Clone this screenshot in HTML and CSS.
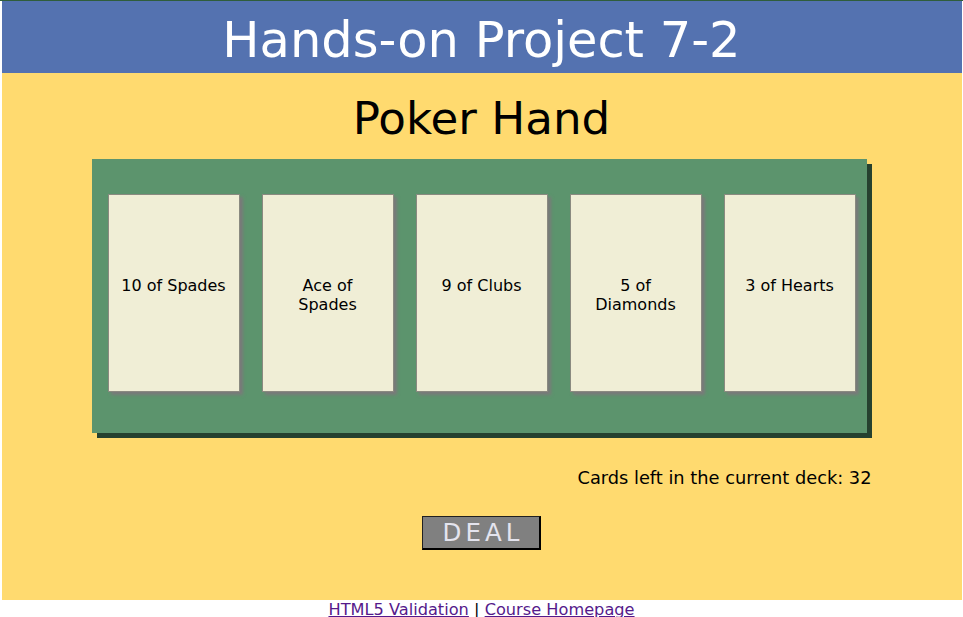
FILE: index.html
```html
<!DOCTYPE html>
<html lang="en">
<head>
<meta charset="utf-8">
<title>Hands-on Project 7-2</title>
<link rel="stylesheet" href="styles.css">
</head>
<body>
<div class="topline"></div>
<div class="wrapper">
  <header class="site-header">Hands-on Project 7-2</header>
  <article class="main">
    <h2 class="title">Poker Hand</h2>
    <div class="table-area">
      <div class="felt">
        <div class="card">10 of Spades</div>
        <div class="card">Ace of Spades</div>
        <div class="card">9 of Clubs</div>
        <div class="card">5 of Diamonds</div>
        <div class="card">3 of Hearts</div>
      </div>
      <p class="deck-count">Cards left in the current deck: 32</p>
    </div>
    <div class="actions"><button class="deal">DEAL</button></div>
  </article>
</div>
<footer class="site-footer">
  <a class="link" href="#">HTML5 Validation</a> | <a class="link" href="#">Course Homepage</a>
</footer>
</body>
</html>
```
FILE: styles.css
```css
html, body {
  margin: 0;
  padding: 0;
  background: #ffffff;
}
body {
  font-family: "DejaVu Sans", Verdana, sans-serif;
  color: #000;
}
.topline {
  height: 1px;
  background: #2f5d3b;
}
.wrapper {
  width: 960px;
  margin: 0 auto;
}
.site-header {
  height: 66px;
  padding-top: 6px;
  line-height: 66px;
  background: #5472b0;
  color: #ffffff;
  font-size: 49.5px;
  text-align: center;
}
.main {
  background: #ffda6f;
  padding: 20px 0 50px;
}
.title {
  margin: 0 0 14px;
  font-size: 45.2px;
  font-weight: normal;
  line-height: 52px;
  text-align: center;
}
.table-area {
  width: 780px;
  margin: 0 auto;
}
.felt {
  width: 775px;
  height: 274px;
  box-sizing: border-box;
  padding: 35px 0 0 16px;
  background: #5c946d;
  box-shadow: 5px 5px 0 #26412f;
  display: flex;
  gap: 22px;
  align-items: flex-start;
}
.card {
  width: 132px;
  height: 198px;
  box-sizing: border-box;
  padding: 81px 11px 0;
  background: #f0eed6;
  border: 1px solid #8a8a80;
  box-shadow: 3px 3px 3px #7a7a7a;
  text-align: center;
  font-size: 16px;
  line-height: 19px;
}
.deck-count {
  margin: 34px 0 0;
  font-size: 17.8px;
  line-height: 21px;
  text-align: right;
}
.actions {
  display: flex;
  justify-content: center;
  margin-top: 28px;
}
.deal {
  width: 119px;
  height: 34px;
  box-sizing: border-box;
  background: #808080;
  color: #e4e4ee;
  border-style: solid;
  border-width: 1px 2px 2px 1px;
  border-color: #202020 #000 #000 #202020;
  font-family: "DejaVu Sans", Verdana, sans-serif;
  font-size: 24.5px;
  letter-spacing: 4px;
  padding: 0 0 0 4px;
  line-height: 30px;
}
.site-footer {
  text-align: center;
  font-size: 16.2px;
  line-height: 19px;
}
.link {
  color: #551a8b;
}
```
